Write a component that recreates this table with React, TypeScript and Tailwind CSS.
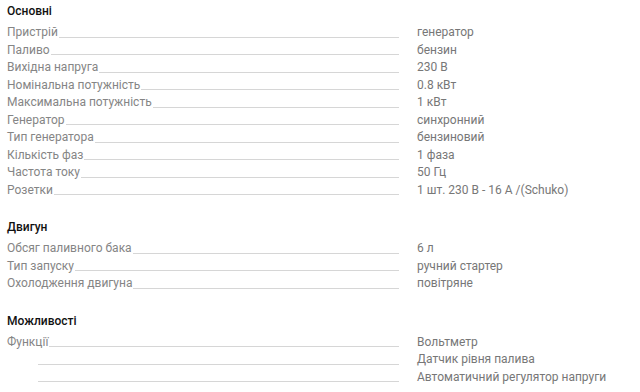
type Row = { label: string; values: string[] };
type Section = { title: string; rows: Row[] };

const sections: Section[] = [
  {
    title: "Основні",
    rows: [
      { label: "Пристрій", values: ["генератор"] },
      { label: "Паливо", values: ["бензин"] },
      { label: "Вихідна напруга", values: ["230 В"] },
      { label: "Номінальна потужність", values: ["0.8 кВт"] },
      { label: "Максимальна потужність", values: ["1 кВт"] },
      { label: "Генератор", values: ["синхронний"] },
      { label: "Тип генератора", values: ["бензиновий"] },
      { label: "Кількість фаз", values: ["1 фаза"] },
      { label: "Частота току", values: ["50 Гц"] },
      { label: "Розетки", values: ["1 шт. 230 В - 16 А /(Schuko)"] },
    ],
  },
  {
    title: "Двигун",
    rows: [
      { label: "Обсяг паливного бака", values: ["6 л"] },
      { label: "Тип запуску", values: ["ручний стартер"] },
      { label: "Охолодження двигуна", values: ["повітряне"] },
    ],
  },
  {
    title: "Можливості",
    rows: [
      {
        label: "Функції",
        values: ["Вольтметр", "Датчик рівня палива", "Автоматичний регулятор напруги"],
      },
    ],
  },
];

function SpecLine({ label, value, extra }: { label?: string; value: string; extra?: boolean }) {
  return (
    <div className="flex h-[17.5px] items-end">
      <div className={`flex w-[392px] items-end ${extra ? "pl-[30px]" : ""}`}>
        {label && <span className="whitespace-nowrap text-[#858585]">{label}</span>}
        <span className="mb-[4px] ml-[1px] flex-1 border-b border-[#d6d6d6]" />
      </div>
      <span className="ml-[18px] whitespace-nowrap text-[#777]">{value}</span>
    </div>
  );
}

export default function App() {
  return (
    <div className="h-[392px] w-[640px] overflow-hidden bg-white px-[7px] pt-[2px] font-['Roboto',sans-serif] text-[12px] leading-[17.5px]">
      {sections.map((s) => (
        <div key={s.title} className="mb-[19px]">
          <h3 className="mb-[4px] text-[12px] font-medium leading-[18px] text-[#111]">{s.title}</h3>
          {s.rows.map((r) =>
            r.values.map((v, i) => (
              <SpecLine key={r.label + v} label={i === 0 ? r.label : undefined} value={v} extra={i > 0} />
            ))
          )}
        </div>
      ))}
    </div>
  );
}
